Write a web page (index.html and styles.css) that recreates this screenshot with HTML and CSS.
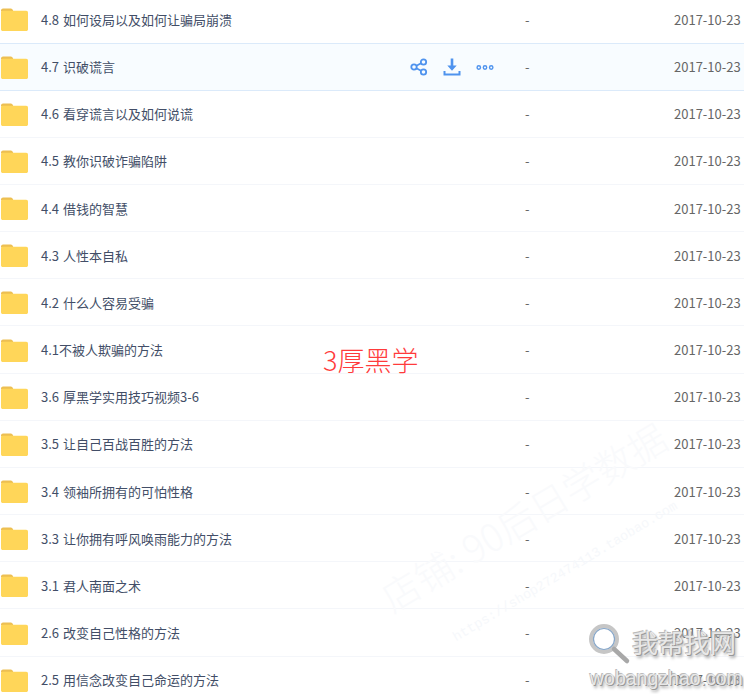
FILE: index.html
```html
<!DOCTYPE html>
<html lang="zh-CN">
<head>
<meta charset="utf-8">
<title>文件列表</title>
<link rel="stylesheet" href="styles.css">
</head>
<body>
<svg class="defs" width="0" height="0" aria-hidden="true">
  <defs>
    <symbol id="folder" viewBox="0 0 28 24">
      <path d="M1 3.500C1 2.200 2 1.500 3 1.500h7.500c1 0 1.800.5 2.300 1.500L13.500 4.500H1z" fill="#edbf52"/>
      <path d="M1 5.500c0-1 .8-1.800 1.800-1.800h23.400c1 0 1.800.8 1.800 1.800v16.700c0 1-.8 1.800-1.800 1.800H2.800c-1 0-1.800-.8-1.800-1.800z" fill="#ffd659"/>
    </symbol>
  </defs>
</svg>
<div class="wm wm-a">https://shop272474113.taobao.com</div>
<div class="wm wm-b">店铺: 90后日学数据</div>
<main class="list">
  <div class="row"><svg class="folder"><use href="#folder"/></svg><span class="name">4.8 如何设局以及如何让骗局崩溃</span><span class="size">-</span><span class="date">2017-10-23</span></div>
  <div class="row active"><svg class="folder"><use href="#folder"/></svg><span class="name">4.7 识破谎言</span>
    <span class="actions">
      <svg class="act" viewBox="0 0 18 18"><g fill="none" stroke="#4f93ee" stroke-width="1.800"><circle cx="4" cy="9" r="2.700"/><circle cx="13.500" cy="4" r="2.700"/><circle cx="13.500" cy="14" r="2.700"/><path d="M6.400 7.700l4.700-2.400M6.400 10.300l4.700 2.400"/></g></svg>
      <svg class="act" viewBox="0 0 18 18"><g fill="#4f93ee"><path d="M7.700 0.500h2.600v7h3.400L9 12.800 4.300 7.500h3.400z"/><path d="M0.500 13h2v2.500h13V13h2v4.500h-17z"/></g></svg>
      <svg class="act" viewBox="0 0 18 18"><g fill="none" stroke="#4f93ee" stroke-width="1.400"><circle cx="2.800" cy="9.500" r="1.700"/><circle cx="9" cy="9.500" r="1.700"/><circle cx="15.200" cy="9.500" r="1.700"/></g></svg>
    </span>
    <span class="size">-</span><span class="date">2017-10-23</span></div>
  <div class="row"><svg class="folder"><use href="#folder"/></svg><span class="name">4.6 看穿谎言以及如何说谎</span><span class="size">-</span><span class="date">2017-10-23</span></div>
  <div class="row"><svg class="folder"><use href="#folder"/></svg><span class="name">4.5 教你识破诈骗陷阱</span><span class="size">-</span><span class="date">2017-10-23</span></div>
  <div class="row"><svg class="folder"><use href="#folder"/></svg><span class="name">4.4 借钱的智慧</span><span class="size">-</span><span class="date">2017-10-23</span></div>
  <div class="row"><svg class="folder"><use href="#folder"/></svg><span class="name">4.3 人性本自私</span><span class="size">-</span><span class="date">2017-10-23</span></div>
  <div class="row"><svg class="folder"><use href="#folder"/></svg><span class="name">4.2 什么人容易受骗</span><span class="size">-</span><span class="date">2017-10-23</span></div>
  <div class="row"><svg class="folder"><use href="#folder"/></svg><span class="name">4.1不被人欺骗的方法</span><span class="size">-</span><span class="date">2017-10-23</span></div>
  <div class="row"><svg class="folder"><use href="#folder"/></svg><span class="name">3.6 厚黑学实用技巧视频3-6</span><span class="size">-</span><span class="date">2017-10-23</span></div>
  <div class="row"><svg class="folder"><use href="#folder"/></svg><span class="name">3.5 让自己百战百胜的方法</span><span class="size">-</span><span class="date">2017-10-23</span></div>
  <div class="row"><svg class="folder"><use href="#folder"/></svg><span class="name">3.4 领袖所拥有的可怕性格</span><span class="size">-</span><span class="date">2017-10-23</span></div>
  <div class="row"><svg class="folder"><use href="#folder"/></svg><span class="name">3.3 让你拥有呼风唤雨能力的方法</span><span class="size">-</span><span class="date">2017-10-23</span></div>
  <div class="row"><svg class="folder"><use href="#folder"/></svg><span class="name">3.1 君人南面之术</span><span class="size">-</span><span class="date">2017-10-23</span></div>
  <div class="row"><svg class="folder"><use href="#folder"/></svg><span class="name">2.6 改变自己性格的方法</span><span class="size">-</span><span class="date">2017-10-23</span></div>
  <div class="row"><svg class="folder"><use href="#folder"/></svg><span class="name">2.5 用信念改变自己命运的方法</span><span class="size">-</span><span class="date">2017-10-23</span></div>
</main>
<div class="caption">3厚黑学</div>
<div class="logo">
  <svg class="lens" viewBox="0 0 44 44"><circle cx="15" cy="15" r="13" fill="#fff" fill-opacity="0.6" stroke="#c6c6c6" stroke-width="4"/><circle cx="15" cy="15" r="10.500" fill="none" stroke="#87a6c8" stroke-width="1.200"/><path d="M25 25l13 12" stroke="#a8a8a8" stroke-width="4.500" stroke-linecap="round"/></svg>
  <span class="logo-cn">我帮找网</span>
  <span class="logo-en">wobangzhao.com</span>
</div>
</body>
</html>
```

FILE: styles.css
```css
html, body {
  margin: 0;
  padding: 0;
  height: 694px;
  overflow: hidden;
  background: #fff;
  font-family: "Noto Sans CJK SC", "Noto Sans", sans-serif;
  font-size: 13px;
  color: #424e67;
}

.defs {
  display: block;
  height: 0;
}

.list {
  margin-top: -3.62px;
}

.row {
  display: flex;
  align-items: center;
  box-sizing: border-box;
  height: 47.16px;
  border-bottom: 1px solid #f4f6fa;
}

.row.active {
  background: #f8fcff;
  border-bottom-color: #dbeafa;
  box-shadow: 0 -1px 0 #dbeafa;
}

.folder {
  flex: none;
  width: 28px;
  height: 24px;
  margin-right: 13px;
}

.name {
  flex: 1;
  min-width: 0;
  white-space: nowrap;
  word-spacing: 1px;
}

.actions {
  display: flex;
  gap: 15px;
  margin-right: 31px;
}

.act {
  width: 18px;
  height: 18px;
  display: block;
}

.size {
  flex: none;
  width: 149px;
  color: #666;
}

.date {
  flex: none;
  width: 70px;
  color: #666;
}

.caption {
  position: absolute;
  left: 323px;
  top: 342px;
  font-size: 27px;
  line-height: 36px;
  font-weight: 300;
  color: #ff3b3b;
  white-space: nowrap;
}

.wm {
  position: absolute;
  color: #f9fafc;
  white-space: nowrap;
  transform-origin: left bottom;
  transform: rotate(-31deg);
}

.wm-a {
  left: 458px;
  top: 630px;
  font-size: 13.5px;
  color: #f6f8fb;
  font-family: "Liberation Mono", monospace;
}

.wm-b {
  left: 398px;
  top: 568px;
  font-size: 38px;
  font-weight: 300;
}

.logo {
  position: absolute;
  left: 589px;
  top: 624px;
  width: 155px;
  height: 70px;
}

.lens {
  position: absolute;
  left: 0;
  top: 0;
  width: 44px;
  height: 44px;
}

.logo-cn,
.logo-en {
  position: absolute;
  color: #e8e8e8;
  white-space: nowrap;
  text-shadow: 1px 1px 0 #999, -1px -1px 0 #bbb, 2px 3px 3px #aaa;
}

.logo-cn {
  left: 43px;
  top: 0;
  font-size: 26px;
  line-height: 36px;
}

.logo-en {
  left: 1px;
  top: 40px;
  font-size: 19.5px;
  line-height: 28px;
  font-family: "Liberation Sans", sans-serif;
}
```
